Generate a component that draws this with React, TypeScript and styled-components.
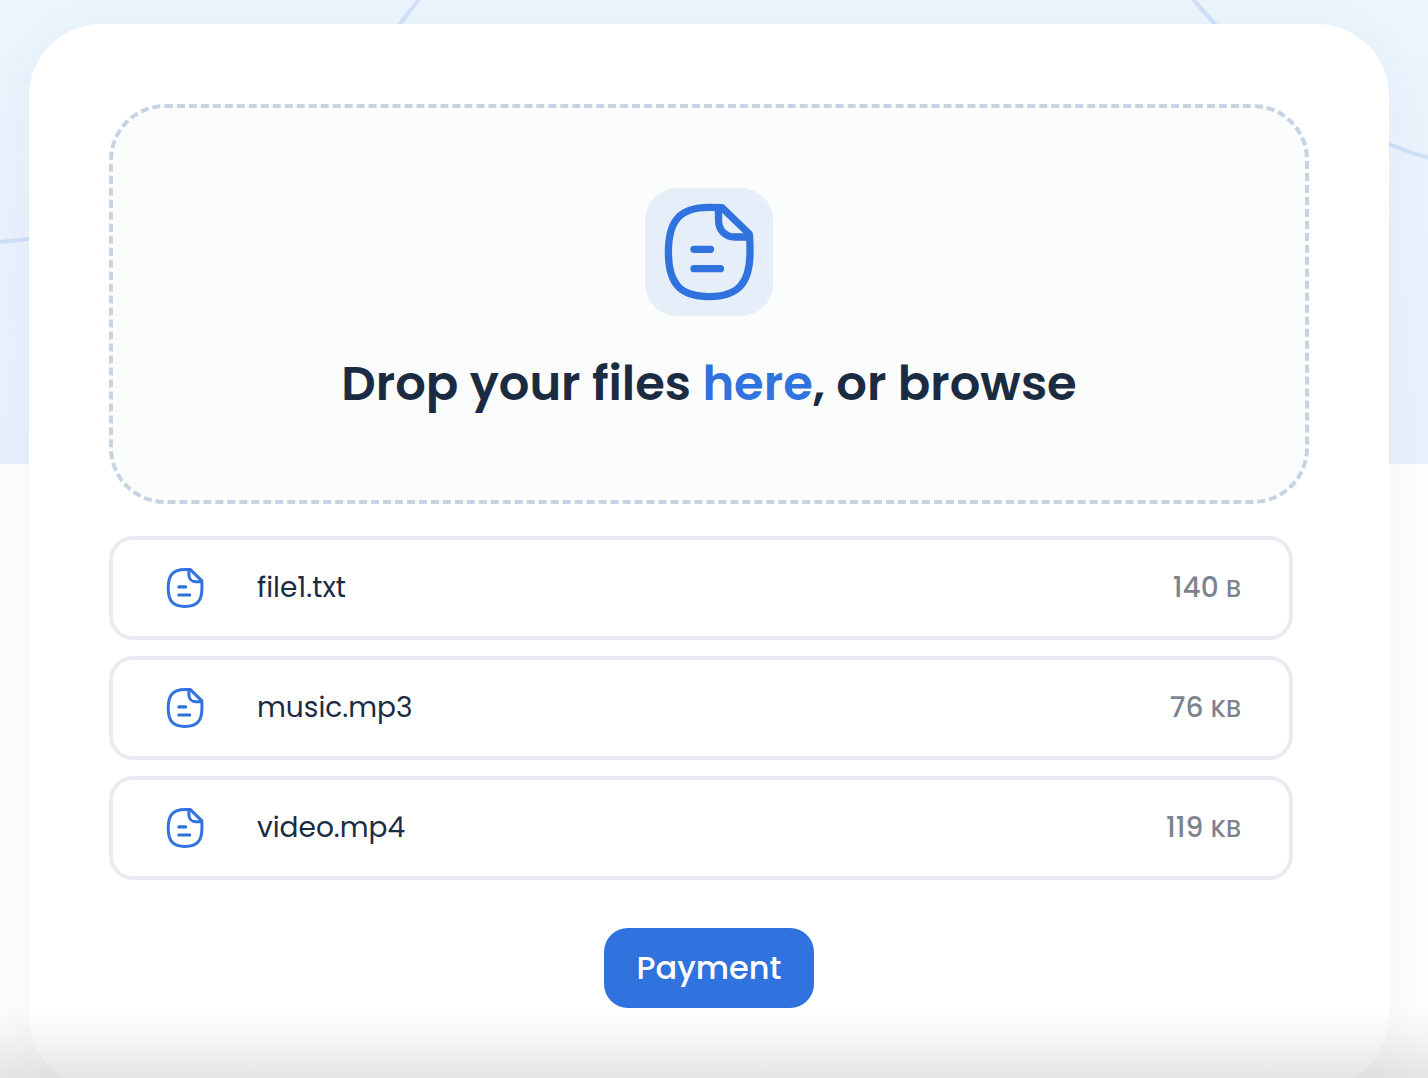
import React from "react";
import styled, { createGlobalStyle } from "styled-components";

const GlobalStyle = createGlobalStyle`
  * {
    box-sizing: border-box;
  }
  body {
    margin: 0;
    background: #fdfdfe;
    color: #1b2b41;
    font-family: Poppins, Inter, "Liberation Sans", sans-serif;
  }
`;

const Page = styled.main`
  position: relative;
  height: 100vh;
  padding: 24px 39px 0 29px;
  overflow: hidden;
`;

const Hero = styled.div`
  position: absolute;
  inset: 0 0 auto 0;
  height: 464px;
  background: linear-gradient(180deg, #ecf5fd 0%, #e9f1fc 50%, #e9f0fc 100%);

  svg {
    display: block;
    width: 100%;
    height: 100%;
  }
`;

const Card = styled.section`
  position: relative;
  display: flex;
  flex-direction: column;
  align-items: center;
  padding: 80px;
  border-radius: 72px;
  background: #fff;
  box-shadow: 0 8px 48px rgba(60, 100, 160, 0.05);
`;

const DropZone = styled.div`
  display: flex;
  flex-direction: column;
  align-items: center;
  gap: 32px;
  width: 100%;
  padding: 80px;
  border: 4px dashed #c6d3e3;
  border-radius: 56px;
  background: #fbfdfd;
`;

const IconTile = styled.div`
  display: grid;
  place-items: center;
  width: 128px;
  height: 128px;
  border-radius: 32px;
  background: #e6eefa;
`;

const Title = styled.h1`
  margin: 0;
  font-size: 48px;
  font-weight: 600;
  line-height: 72px;
  white-space: nowrap;
`;

const BrowseLink = styled.a`
  color: #3072de;
  text-decoration: none;
`;

const FileList = styled.ul`
  display: flex;
  flex-direction: column;
  gap: 16px;
  width: 100%;
  margin: 32px 0 48px;
  padding: 0 16px 0 0;
  list-style: none;
`;

const FileRow = styled.li`
  display: flex;
  align-items: center;
  gap: 48px;
  height: 104px;
  padding: 0 48px;
  border: 4px solid #e8ecf1;
  border-radius: 24px;
  font-size: 28px;
  line-height: 42px;
`;

const FileName = styled.span`
  flex: 1;
`;

const FileSize = styled.span`
  color: #7b848e;
  font-weight: 500;
`;

const Unit = styled.span`
  font-size: 24px;
`;

const PayButton = styled.button`
  height: 80px;
  padding: 0 32px;
  border: 0;
  border-radius: 24px;
  background: #3072de;
  color: #fff;
  font-family: inherit;
  font-size: 32px;
  font-weight: 500;
  line-height: 48px;
  cursor: pointer;
`;

const BottomShade = styled.div`
  position: absolute;
  inset: auto 0 0 0;
  height: 72px;
  background: linear-gradient(180deg, rgba(0, 0, 0, 0), rgba(0, 0, 0, 0.03) 40%, rgba(0, 0, 0, 0.1));
  pointer-events: none;
`;

function DocumentIcon({ size }: { size: number }) {
  return (
    <svg
      width={size}
      height={size}
      viewBox="0 0 116 116"
      fill="none"
      stroke="#3072de"
      strokeWidth="7.3"
      strokeLinecap="round"
      strokeLinejoin="round"
      aria-hidden="true"
    >
      <path d="M71 13.6C67 13.4 62 13.4 58 13.4C28.5 13.4 17.4 27 17.4 58C17.4 89 28.5 102.6 58 102.6C87.5 102.6 99 89 99 58C99 51 99 45 98.3 40Z" />
      <path d="M67.5 14V26C67.5 36 74 43 84 43H98" />
      <path d="M43 55.3H59.5M43 74.7H69.5" />
    </svg>
  );
}

const files = [
  { name: "file1.txt", amount: 140, unit: "B" },
  { name: "music.mp3", amount: 76, unit: "KB" },
  { name: "video.mp4", amount: 119, unit: "KB" },
];

export default function App() {
  return (
    <>
      <GlobalStyle />
      <Page>
        <Hero>
          <svg
            viewBox="0 0 1428 464"
            preserveAspectRatio="none"
            fill="none"
            stroke="#cfdff8"
            strokeWidth="4"
            aria-hidden="true"
          >
            <path d="M-4 242.5C150 228 300 160 420 -2" />
            <path d="M1192 -2C1249 66 1320 126 1432 159" />
          </svg>
        </Hero>
        <Card>
          <DropZone>
            <IconTile>
              <DocumentIcon size={116} />
            </IconTile>
            <Title>
              Drop your files <BrowseLink href="#browse">here</BrowseLink>, or browse
            </Title>
          </DropZone>
          <FileList>
            {files.map((file) => (
              <FileRow key={file.name}>
                <DocumentIcon size={48} />
                <FileName>{file.name}</FileName>
                <FileSize>
                  {file.amount} <Unit>{file.unit}</Unit>
                </FileSize>
              </FileRow>
            ))}
          </FileList>
          <PayButton type="button">Payment</PayButton>
        </Card>
        <BottomShade />
      </Page>
    </>
  );
}
